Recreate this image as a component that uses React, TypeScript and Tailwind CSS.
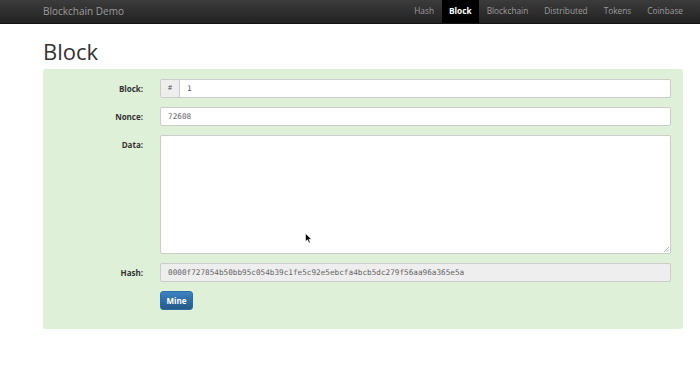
import React from "react";

export default function App() {
  const navItems = ["Hash", "Block", "Blockchain", "Distributed", "Tokens", "Coinbase"];
  const mono = { fontFamily: '"DejaVu Sans Mono", monospace' };
  return (
    <div className="w-[700px] h-[381px] bg-white overflow-hidden" style={{ fontFamily: '"Open Sans", "DejaVu Sans", sans-serif' }}>
      <div className="h-[24px] bg-gradient-to-b from-[#3c3c3c] to-[#222] border-b border-[#111] flex items-center pl-[43px] pr-[9px]">
        <div className="text-[#9d9d9d] text-[10px] flex-1">Blockchain Demo</div>
        <div className="flex h-full text-[8.3px] text-[#9d9d9d]">
          {navItems.map((n) => (
            <div
              key={n}
              className={
                n === "Block"
                  ? "h-full flex items-center px-[7px] bg-black text-white font-bold"
                  : "h-full flex items-center px-[8px]"
              }
            >
              {n}
            </div>
          ))}
        </div>
      </div>
      <div className="px-[43px] pr-[17px]">
        <h1 className="text-[22px] text-[#333] leading-none pt-[16px] pb-[7px]">Block</h1>
        <div className="bg-[#dff0d8] rounded-[3px] pt-[10px] pb-[19px] pr-[12px] text-[8px]">
          <div className="flex flex-col gap-[9px]">
            <div className="flex items-center">
              <div className="w-[100px] text-right font-bold text-[#333]">Block:</div>
              <div className="ml-[17px] flex-1 flex h-[19px] border border-[#ccc] rounded-[2px] bg-white overflow-hidden">
                <div className="w-[19px] bg-[#eee] border-r border-[#ccc] flex items-center justify-center text-[#555] text-[7px]">#</div>
                <div className="flex items-center pl-[7px] text-[#555] text-[7.7px]" style={mono}>1</div>
              </div>
            </div>
            <div className="flex items-center">
              <div className="w-[100px] text-right font-bold text-[#333]">Nonce:</div>
              <div className="ml-[17px] flex-1 h-[19px] border border-[#ccc] rounded-[2px] bg-white flex items-center pl-[7px] text-[#666] text-[7.7px]" style={mono}>72608</div>
            </div>
            <div className="flex items-start">
              <div className="w-[100px] text-right font-bold text-[#333] pt-[4px]">Data:</div>
              <div className="ml-[17px] flex-1 h-[119px] border border-[#ccc] rounded-[2px] bg-white relative">
                <svg className="absolute left-[144px] top-[97px]" width="8" height="11" viewBox="0 0 8 11">
                  <path d="M0.5 0.5 L0.5 8.5 L2.5 6.8 L4 10 L5.3 9.4 L3.9 6.3 L6.5 6.3 Z" fill="#000" stroke="#fff" strokeWidth="0.6" />
                </svg>
                <svg className="absolute right-[1px] bottom-[1px]" width="6" height="6" viewBox="0 0 6 6">
                  <path d="M1 6 L6 1 M3.5 6 L6 3.5" stroke="#999" strokeWidth="0.7" />
                </svg>
              </div>
            </div>
            <div className="flex items-center">
              <div className="w-[100px] text-right font-bold text-[#333]">Hash:</div>
              <div className="ml-[17px] flex-1 h-[19px] border border-[#ccc] rounded-[2px] bg-[#eee] flex items-center pl-[7px] text-[#666] text-[7.7px]" style={mono}>0000f727854b50bb95c054b39c1fe5c92e5ebcfa4bcb5dc279f56aa96a365e5a</div>
            </div>
            <div className="flex">
              <div className="w-[100px]" />
              <div className="ml-[17px] w-[33px] h-[19px] rounded-[3px] border border-[#2e6da4] bg-gradient-to-b from-[#3b82c4] to-[#265a88] text-white font-bold flex items-center justify-center text-[8px]">Mine</div>
            </div>
          </div>
        </div>
      </div>
    </div>
  );
}
